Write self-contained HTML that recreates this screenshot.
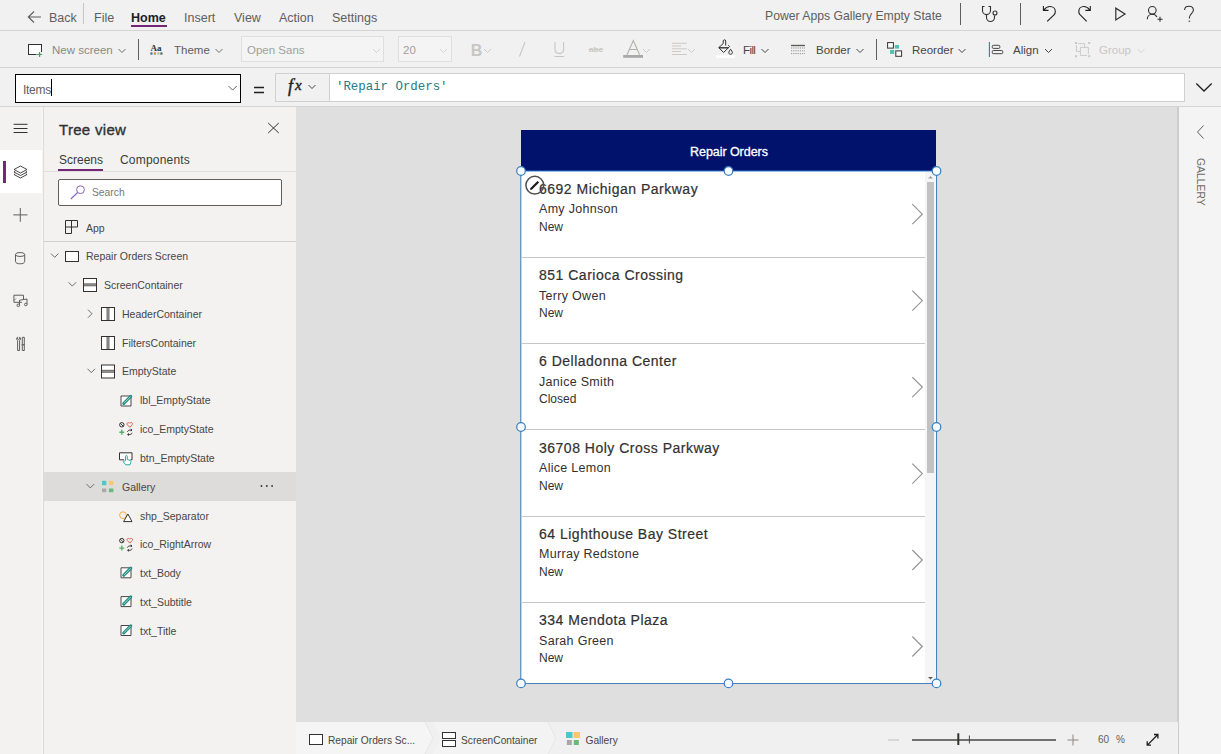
<!DOCTYPE html>
<html><head><meta charset="utf-8">
<style>
*{box-sizing:border-box;margin:0;padding:0}
html,body{width:1221px;height:754px;overflow:hidden;background:#f1f1f1;font-family:"Liberation Sans",sans-serif;color:#323130;position:relative}
.a{position:absolute}
.t{position:absolute;white-space:nowrap;line-height:1}
svg{position:absolute;overflow:visible}
.ov{pointer-events:none}
</style></head><body>
<!-- top bar -->
<div class="a" style="left:0;top:0;width:1221px;height:30px;background:#f1f1f1"></div>
<div class="a" style="left:0;top:30px;width:1221px;height:1px;background:#d4d4d4"></div>

<!-- TOPBAR CONTENT -->
<div class="t" style="left:49px;top:11.8px;font-size:12.5px;color:#605e5c">Back</div>
<div class="a" style="left:83px;top:3px;width:1px;height:21px;background:#c8c6c4"></div>
<div class="t" style="left:94px;top:11.8px;font-size:12.5px;color:#605e5c">File</div>
<div class="t" style="left:131px;top:11.8px;font-size:12.5px;color:#201f1e;font-weight:bold">Home</div>
<div class="a" style="left:131px;top:25px;width:36px;height:2px;background:#742774"></div>
<div class="t" style="left:184px;top:11.8px;font-size:12.5px;color:#605e5c">Insert</div>
<div class="t" style="left:234px;top:11.8px;font-size:12.5px;color:#605e5c">View</div>
<div class="t" style="left:279px;top:11.8px;font-size:12.5px;color:#605e5c">Action</div>
<div class="t" style="left:332px;top:11.8px;font-size:12.5px;color:#605e5c">Settings</div>
<div class="t" style="left:765px;top:10.3px;font-size:12.2px;color:#605e5c">Power Apps Gallery Empty State</div>
<div class="a" style="left:960px;top:3px;width:1px;height:22px;background:#605e5c"></div>
<div class="a" style="left:1020px;top:3px;width:1px;height:22px;background:#605e5c"></div>
<!-- toolbar -->
<div class="a" style="left:0;top:67px;width:1221px;height:1px;background:#d4d4d4"></div>
<!-- formula bar -->
<div class="a" style="left:0;top:106px;width:1221px;height:1px;background:#d4d4d4"></div>

<!-- TOOLBAR CONTENT -->
<div class="t" style="left:52px;top:44.5px;font-size:11.5px;color:#8a8886">New screen</div>
<div class="a" style="left:138px;top:39px;width:1px;height:21px;background:#605e5c"></div>
<div class="t" style="left:174px;top:44.5px;font-size:11.5px;color:#605e5c">Theme</div>
<div class="a" style="left:241px;top:36px;width:143px;height:26px;background:#f4f4f4;border:1px solid #e1dfdd"></div>
<div class="t" style="left:247px;top:44.5px;font-size:11.5px;color:#a19f9d">Open Sans</div>
<div class="a" style="left:398px;top:36px;width:54px;height:26px;background:#f4f4f4;border:1px solid #e1dfdd"></div>
<div class="t" style="left:403px;top:44.5px;font-size:11.5px;color:#a19f9d">20</div>
<div class="t" style="left:743px;top:44.5px;font-size:11.5px;color:#484644;letter-spacing:-0.6px">Fill</div>
<div class="t" style="left:816px;top:44.5px;font-size:11.5px;color:#484644">Border</div>
<div class="a" style="left:876px;top:39px;width:1px;height:21px;background:#605e5c"></div>
<div class="t" style="left:912px;top:44.5px;font-size:11.5px;color:#484644">Reorder</div>
<div class="t" style="left:1013px;top:44.5px;font-size:11.5px;color:#484644">Align</div>
<div class="t" style="left:1099px;top:44.5px;font-size:11.5px;color:#c8c6c4">Group</div>
<!-- FORMULA BAR -->
<div class="a" style="left:15px;top:74px;width:226px;height:29px;background:#fff;border:1.5px solid #000"></div>
<div class="t" style="left:23px;top:83.5px;font-size:12px;color:#605e5c;letter-spacing:-0.3px">Items</div>
<div class="a" style="left:51px;top:79px;width:1px;height:17px;background:#000"></div>
<div class="a" style="left:275px;top:73px;width:55px;height:29px;background:#f1f1f1;border:1px solid #d2d0ce"></div>
<div class="a" style="left:329px;top:73px;width:856px;height:29px;background:#fff;border:1px solid #d2d0ce"></div>
<div class="t" style="left:336px;top:81px;font-size:12.4px;color:#227b85;font-family:'Liberation Mono',monospace">'Repair Orders'</div>
<div class="t" style="left:288px;top:76.5px;font-size:18px;color:#201f1e;font-family:'Liberation Serif',serif;font-style:italic;-webkit-text-stroke:0.4px #201f1e">f</div>
<div class="t" style="left:295px;top:78px;font-size:15px;color:#201f1e;font-family:'Liberation Serif',serif;font-style:italic;-webkit-text-stroke:0.4px #201f1e">x</div>
<!-- left rail -->
<div class="a" style="left:0;top:107px;width:43px;height:647px;background:#f3f2f1"></div>
<div class="a" style="left:41px;top:107px;width:2px;height:647px;background:#f6f5f4"></div>
<div class="a" style="left:43px;top:107px;width:1px;height:647px;background:#dcdcdc"></div>
<!-- tree panel -->
<div class="a" style="left:44px;top:107px;width:252px;height:647px;background:#f3f2f1"></div>
<!-- canvas -->
<div class="a" style="left:296px;top:107px;width:882px;height:615px;background:#dfdfdf"></div>
<!-- bottom bar -->
<!-- right panel -->
<div class="a" style="left:1177px;top:107px;width:2px;height:647px;background:#cdcdcd"></div>
<div class="a" style="left:1179px;top:107px;width:42px;height:647px;background:#f4f4f4"></div>


<!-- TREE -->
<div class="a" style="left:0;top:150px;width:42px;height:43px;background:#fff"></div>
<div class="a" style="left:3px;top:161px;width:3px;height:22px;background:#742774"></div>
<div class="t" style="left:59px;top:122px;font-size:15px;color:#323130;-webkit-text-stroke:0.35px #323130;letter-spacing:0.3px">Tree view</div>
<div class="t" style="left:59px;top:153.5px;font-size:12px;color:#3b3a39">Screens</div>
<div class="t" style="left:120px;top:153.5px;font-size:12px;color:#3b3a39;letter-spacing:0.2px">Components</div>
<div class="a" style="left:44px;top:171px;width:252px;height:1px;background:#e1dfdd"></div>
<div class="a" style="left:58px;top:169px;width:45px;height:2px;background:#742774"></div>
<div class="a" style="left:58px;top:179px;width:224px;height:27px;background:#fff;border:1px solid #605e5c;border-radius:2px"></div>
<div class="t" style="left:92px;top:188.3px;font-size:10.3px;color:#797775">Search</div>
<div class="t" style="left:86px;top:223.4px;font-size:10.5px;color:#484644">App</div>
<div class="a" style="left:44px;top:241px;width:252px;height:1px;background:#d2d0ce"></div>
<div class="a" style="left:44px;top:472px;width:252px;height:29px;background:#dddcdb"></div>
<div class="t" style="left:86px;top:251.1px;font-size:10.5px;color:#484644">Repair Orders Screen</div>
<div class="t" style="left:104px;top:279.9px;font-size:10.5px;color:#484644">ScreenContainer</div>
<div class="t" style="left:122px;top:308.7px;font-size:10.5px;color:#484644">HeaderContainer</div>
<div class="t" style="left:122px;top:337.6px;font-size:10.5px;color:#484644">FiltersContainer</div>
<div class="t" style="left:122px;top:366.4px;font-size:10.5px;color:#484644">EmptyState</div>
<div class="t" style="left:140px;top:395.2px;font-size:10.5px;color:#484644">lbl_EmptyState</div>
<div class="t" style="left:140px;top:424.1px;font-size:10.5px;color:#484644">ico_EmptyState</div>
<div class="t" style="left:140px;top:452.9px;font-size:10.5px;color:#484644">btn_EmptyState</div>
<div class="t" style="left:122px;top:481.7px;font-size:10.5px;color:#484644">Gallery</div>
<div class="t" style="left:140px;top:510.6px;font-size:10.5px;color:#484644">shp_Separator</div>
<div class="t" style="left:140px;top:539.4px;font-size:10.5px;color:#484644">ico_RightArrow</div>
<div class="t" style="left:140px;top:568.2px;font-size:10.5px;color:#484644">txt_Body</div>
<div class="t" style="left:140px;top:597.0px;font-size:10.5px;color:#484644">txt_Subtitle</div>
<div class="t" style="left:140px;top:625.9px;font-size:10.5px;color:#484644">txt_Title</div>

<!-- BOTTOM BAR -->
<div class="a" style="left:296px;top:722px;width:882px;height:32px;background:#f0f0f0"></div>
<svg class="ov" style="left:296px;top:722px" width="300" height="32" viewBox="0 0 300 32">
<path d="M0 0H129L137 16L129 32H0Z" fill="#f5f5f5"/>
<path d="M129 0L137 16L129 32" fill="none" stroke="#e6e6e6" stroke-width="1"/>
<path d="M137 0H252L260 16L252 32H137L145 16Z" fill="#f3f3f3"/>
<path d="M252 0L260 16L252 32" fill="none" stroke="#e6e6e6" stroke-width="1"/>
</svg>
<div class="t" style="left:328px;top:735.6px;font-size:10.2px;color:#484644">Repair Orders Sc...</div>
<div class="t" style="left:461px;top:735.6px;font-size:10.2px;color:#484644">ScreenContainer</div>
<div class="t" style="left:585.5px;top:735.6px;font-size:10.2px;color:#484644">Gallery</div>
<div class="t" style="left:1098px;top:735.3px;font-size:10px;color:#605e5c">60</div>
<div class="t" style="left:1116px;top:735.3px;font-size:10px;color:#605e5c">%</div>
<!-- RIGHT PANEL -->
<div class="t" style="left:1205.3px;top:158px;font-size:10.4px;color:#6b6967;transform-origin:0 0;transform:rotate(90deg);letter-spacing:0px">GALLERY</div>
<!-- app -->
<div class="a" style="left:521px;top:130px;width:415px;height:41px;background:#00126b"></div>
<div class="a" style="left:521px;top:171px;width:415px;height:513px;background:#fff"></div>
<div class="t" style="left:690px;top:146px;font-size:12.5px;color:#fff;-webkit-text-stroke:0.3px #fff;letter-spacing:-0.05px">Repair Orders</div>
<div class="t" style="left:539px;top:181.8px;font-size:14px;color:#323130;letter-spacing:0.5px;-webkit-text-stroke:0.2px #323130">6692 Michigan Parkway</div>
<div class="t" style="left:539px;top:203.4px;font-size:12.5px;color:#323130;letter-spacing:0.3px">Amy Johnson</div>
<div class="t" style="left:539px;top:220.8px;font-size:12px;color:#323130">New</div>
<div class="a" style="left:522px;top:257px;width:403px;height:1px;background:#c8c6c4"></div>
<div class="t" style="left:539px;top:268.1px;font-size:14px;color:#323130;letter-spacing:0.5px;-webkit-text-stroke:0.2px #323130">851 Carioca Crossing</div>
<div class="t" style="left:539px;top:289.7px;font-size:12.5px;color:#323130;letter-spacing:0.3px">Terry Owen</div>
<div class="t" style="left:539px;top:307.1px;font-size:12px;color:#323130">New</div>
<div class="a" style="left:522px;top:343px;width:403px;height:1px;background:#c8c6c4"></div>
<div class="t" style="left:539px;top:354.3px;font-size:14px;color:#323130;letter-spacing:0.5px;-webkit-text-stroke:0.2px #323130">6 Delladonna Center</div>
<div class="t" style="left:539px;top:375.9px;font-size:12.5px;color:#323130;letter-spacing:0.3px">Janice Smith</div>
<div class="t" style="left:539px;top:393.3px;font-size:12px;color:#323130">Closed</div>
<div class="a" style="left:522px;top:429px;width:403px;height:1px;background:#c8c6c4"></div>
<div class="t" style="left:539px;top:440.6px;font-size:14px;color:#323130;letter-spacing:0.5px;-webkit-text-stroke:0.2px #323130">36708 Holy Cross Parkway</div>
<div class="t" style="left:539px;top:462.2px;font-size:12.5px;color:#323130;letter-spacing:0.3px">Alice Lemon</div>
<div class="t" style="left:539px;top:479.6px;font-size:12px;color:#323130">New</div>
<div class="a" style="left:522px;top:516px;width:403px;height:1px;background:#c8c6c4"></div>
<div class="t" style="left:539px;top:526.8px;font-size:14px;color:#323130;letter-spacing:0.5px;-webkit-text-stroke:0.2px #323130">64 Lighthouse Bay Street</div>
<div class="t" style="left:539px;top:548.4px;font-size:12.5px;color:#323130;letter-spacing:0.3px">Murray Redstone</div>
<div class="t" style="left:539px;top:565.8px;font-size:12px;color:#323130">New</div>
<div class="a" style="left:522px;top:602px;width:403px;height:1px;background:#c8c6c4"></div>
<div class="t" style="left:539px;top:613.1px;font-size:14px;color:#323130;letter-spacing:0.5px;-webkit-text-stroke:0.2px #323130">334 Mendota Plaza</div>
<div class="t" style="left:539px;top:634.7px;font-size:12.5px;color:#323130;letter-spacing:0.3px">Sarah Green</div>
<div class="t" style="left:539px;top:652.1px;font-size:12px;color:#323130">New</div>
<div class="a" style="left:925px;top:172px;width:10px;height:511px;background:#f5f5f5"></div>
<div class="a" style="left:927px;top:182px;width:7px;height:291px;background:#c2c2c2"></div>

<svg class="ov" style="left:0;top:0" width="1221" height="754" viewBox="0 0 1221 754" fill="none" stroke-linecap="butt">
<!-- back arrow -->
<path d="M41 17H28.5M34 11.5L28.3 17L34 22.5" stroke="#605e5c" stroke-width="1.1"/>
<!-- stethoscope -->
<g stroke="#323130" stroke-width="1.1">
<path d="M984.5 6.5H982.5V10.5C982.5 12.8 984.3 14.6 986.5 14.6C988.7 14.6 990.5 12.8 990.5 10.5V6.5H988.5"/>
<path d="M986.5 14.6V17.5C986.5 19.8 988.3 21.5 990.5 21.5C992.7 21.5 994.5 19.8 994.5 17.5V15.5"/>
<circle cx="995" cy="13" r="2"/>
</g>
<!-- undo -->
<path d="M1043.4 6V10.4H1048.5M1043.9 10C1045.5 7.8 1047.6 6.5 1050 6.5C1053 6.5 1055.3 8.7 1055.3 11.5C1055.3 12.8 1054.8 14 1054 14.8L1047.2 21.4" stroke="#201f1e" stroke-width="1.1"/>
<!-- redo -->
<path d="M1090.3 6V10.4H1085.4M1089.8 10C1088.2 7.8 1086.2 6.5 1083.8 6.5C1080.9 6.5 1078.8 8.7 1078.8 11.5C1078.8 12.8 1079.3 14 1080 14.6L1086.7 21.4" stroke="#201f1e" stroke-width="1.1"/>
<!-- play -->
<path d="M1115.8 8.2V20L1125 14.1Z" stroke="#323130" stroke-width="1.2" stroke-linejoin="miter"/>
<!-- person add -->
<g stroke="#323130" stroke-width="1.1">
<circle cx="1152.3" cy="10.3" r="3.8"/>
<path d="M1147.3 19.3C1147.3 16.3 1149.5 14.3 1152.3 14.3C1154.6 14.3 1156.2 15.5 1156.9 17"/>
<path d="M1160 16.8V21.8M1157.5 19.3H1162.6"/>
</g>
<!-- help -->
<path d="M1184.6 10C1184.6 7.6 1186.6 6.2 1189 6.2C1191.5 6.2 1193.4 7.8 1193.4 10.2C1193.4 12.9 1189.4 13.9 1189.4 17.6V18.6" stroke="#323130" stroke-width="1.1"/>
<path d="M1188.6 21.2H1190.2" stroke="#323130" stroke-width="1"/>

<!-- toolbar icons -->
<rect x="28.5" y="44.5" width="13" height="10" fill="#fff" stroke="#323130" stroke-width="1"/>
<path d="M36.5 52H42.5V56H36.5Z" fill="#f1f1f1"/>
<path d="M39.6 52V57M37.1 54.5H42.1" stroke="#4c9a5c" stroke-width="1.2"/>
<path d="M118.5 49L122 52.5L125.5 49" stroke="#605e5c" stroke-width="0.9"/>
<text x="150.5" y="50.8" font-family="Liberation Serif" font-size="9" font-weight="bold" fill="#323130">Aa</text>
<rect x="150.3" y="52.3" width="2.2" height="2.4" fill="#4a77b4"/>
<rect x="153.8" y="52.3" width="2.2" height="2.4" fill="#e0883a"/>
<rect x="157.3" y="52.3" width="2.2" height="2.4" fill="#c9b78d"/>
<rect x="160.3" y="52.3" width="2.2" height="2.4" fill="#4f7268"/>
<path d="M215.5 49L219 52.5L222.5 49" stroke="#605e5c" stroke-width="0.9"/>
<path d="M373 49L376.5 52.5L380 49" stroke="#d2d0ce" stroke-width="0.9"/>
<path d="M440 49L443.5 52.5L447 49" stroke="#d2d0ce" stroke-width="0.9"/>
<!-- B I U abc -->
<text x="470.8" y="55.6" font-family="Liberation Sans" font-size="16" font-weight="bold" fill="#c8c6c4">B</text>
<path d="M484 49L487.5 52.5L491 49" stroke="#c8c6c4" stroke-width="0.9"/>
<path d="M525 42L519.5 56.5" stroke="#c8c6c4" stroke-width="1.1"/>
<path d="M555 42V49.5C555 52 556.8 53.4 559.3 53.4C561.8 53.4 563.6 52 563.6 49.5V42" stroke="#c8c6c4" stroke-width="1.1"/>
<path d="M554.5 56.5H564.2" stroke="#c8c6c4" stroke-width="1"/>
<text x="589" y="52.3" font-family="Liberation Sans" font-size="8" font-weight="bold" fill="#c8c6c4" textLength="14">abc</text>
<path d="M588.5 49.5H603" stroke="#c8c6c4" stroke-width="0.8"/>
<!-- A -->
<path d="M627 54.8L633.3 40.5L639.6 54.8M629.3 49.5H637.3" stroke="#b3b0ad" stroke-width="1.1"/>
<rect x="623.2" y="55" width="19.8" height="2.8" fill="#a8a8a8"/>
<path d="M643 49L646.5 52.5L650 49" stroke="#c8c6c4" stroke-width="0.9"/>
<!-- align text -->
<path d="M672 43.3H686.9M672 46H681M672 48.8H686.9M672 51.5H681M672 54.5H686.9" stroke="#c8c6c4" stroke-width="0.9"/>
<path d="M688 49L691.5 52.5L695 49" stroke="#c8c6c4" stroke-width="0.9"/>
<!-- fill -->
<g stroke="#323130" stroke-width="1" stroke-linejoin="round">
<path d="M723.2 43.6V41C723.2 40.2 723.8 39.8 724.5 39.8C725.2 39.8 725.7 40.2 725.7 41V45.5"/>
<path d="M723.2 43.6L718.7 47.6L723.6 52.5L729.6 46.5L728.2 45.2"/>
<path d="M719 47.8H728.4" stroke-width="1.4"/>
<path d="M730.6 49.2C729.8 50.5 728.8 51.6 728.8 52.6C728.8 53.6 729.6 54.3 730.6 54.3C731.6 54.3 732.4 53.6 732.4 52.6C732.4 51.6 731.4 50.5 730.6 49.2Z"/>
</g>
<rect x="716" y="55.4" width="19" height="2.4" fill="#ffffff"/>
<path d="M761.5 49L765 52.5L768.5 49" stroke="#323130" stroke-width="0.9"/>
<!-- border -->
<rect x="791" y="44.8" width="14" height="1.4" fill="#605e5c"/>
<path d="M791 48H805M791 50.8H805M791 53.6H805" stroke="#8a8886" stroke-width="0.9" stroke-dasharray="1.2 1"/>
<path d="M856.5 49L860 52.5L863.5 49" stroke="#323130" stroke-width="0.9"/>
<!-- reorder -->
<rect x="894.8" y="45" width="4.2" height="3.6" fill="#4ec3b5"/>
<rect x="890" y="50" width="4.2" height="3.9" fill="#4ec3b5"/>
<rect x="887.6" y="42.6" width="5.8" height="5.5" fill="#fff" stroke="#323130" stroke-width="1"/>
<rect x="895.8" y="50.9" width="5.8" height="5.4" fill="#fff" stroke="#323130" stroke-width="1"/>
<path d="M958.5 49L962 52.5L965.5 49" stroke="#323130" stroke-width="0.9"/>
<!-- align -->
<path d="M989.4 42V57" stroke="#2b8a84" stroke-width="1.1"/>
<rect x="992.3" y="45.3" width="7.5" height="3.1" rx="1" stroke="#323130" stroke-width="0.9"/>
<rect x="992.3" y="50.5" width="10.4" height="3.2" rx="1" stroke="#323130" stroke-width="0.9"/>
<path d="M1045 49L1048.5 52.5L1052 49" stroke="#323130" stroke-width="0.9"/>
<!-- group -->
<g fill="#c8c6c4"><rect x="1075" y="42" width="2" height="2"/><rect x="1088.2" y="42" width="2" height="2"/><rect x="1075" y="55.2" width="2" height="2"/><rect x="1088.2" y="55.2" width="2" height="2"/></g>
<path d="M1078 43.6H1084.6V47.3M1076.4 45V51.4H1080.3M1080.4 47.4H1088.4V54M1080.4 47.4V55.4H1087" stroke="#c8c6c4" stroke-width="0.9"/>
<path d="M1137.5 49L1141 52.5L1144.5 49" stroke="#d2d0ce" stroke-width="0.9"/>
<!-- formula chevrons -->
<path d="M228.5 86L232.6 90.1L236.7 86" stroke="#605e5c" stroke-width="1"/>
<path d="M308.5 85L312 88.5L315.5 85" stroke="#323130" stroke-width="0.9"/>
<path d="M254 87.5H264M254 92.5H264" stroke="#201f1e" stroke-width="1.6"/>
<path d="M1196.3 83.5L1204 91L1211.7 83.5" stroke="#201f1e" stroke-width="1.3"/>

<!-- tree icons -->
<path d="M65.5 220.5H77.5V227H71.5V233.5H65.5ZM71.5 220.5V227M65.5 227H71.5" fill="none" stroke="#323130"/>
<rect x="65.5" y="251.5" width="13" height="10" fill="#fff" stroke="#323130"/>
<rect x="83.5" y="278.5" width="13" height="13" fill="#fff" stroke="#323130"/><path d="M84 284.8H96" stroke="#a19f9d" stroke-width="1.6"/><path d="M83.5 283.8H96.5M83.5 285.8H96.5" stroke="#323130" stroke-width="0.7"/>
<rect x="101.5" y="307.5" width="13" height="13" fill="#fff" stroke="#323130"/><path d="M108 308V320" stroke="#a19f9d" stroke-width="1.6"/><path d="M107 307.5V320.5M109 307.5V320.5" stroke="#323130" stroke-width="0.7"/>
<rect x="101.5" y="336.5" width="13" height="13" fill="#fff" stroke="#323130"/><path d="M108 337V349" stroke="#a19f9d" stroke-width="1.6"/><path d="M107 336.5V349.5M109 336.5V349.5" stroke="#323130" stroke-width="0.7"/>
<rect x="101.5" y="365.0" width="13" height="13" fill="#fff" stroke="#323130"/><path d="M102 371.3H114" stroke="#a19f9d" stroke-width="1.6"/><path d="M101.5 370.3H114.5M101.5 372.3H114.5" stroke="#323130" stroke-width="0.7"/>
<path d="M121.0 396.0H131.0V406.0H121.0Z" fill="#fff" stroke="#484644"/><path d="M123.7 403.5L130.8 396.3" stroke="#2a8a80" stroke-width="3" stroke-linecap="round"/><path d="M123.9 403.3L130.6 396.5" stroke="#8ee8dc" stroke-width="0.9"/>
<circle cx="121.8" cy="424.8" r="2.2" stroke="#323130" stroke-width="1"/><path d="M120.3 423.3L123.3 426.3" stroke="#323130" stroke-width="0.9"/><path d="M129.8 427.3L127.39999999999999 424.8C126.6 424.0 127.0 422.6 128.3 422.6C129.1 422.6 129.8 423.3 129.8 423.3C129.8 423.3 130.5 422.6 131.3 422.6C132.6 422.6 133.0 424.0 132.2 424.8Z" stroke="#e0604a" stroke-width="1"/><path d="M121.8 429.8V434.8M119.3 432.3H124.3" stroke="#5cae6a" stroke-width="1.4"/><path d="M127.5 431.8C127.8 430.6 128.8 430.1 129.8 430.1H131.8M130.8 429.1L132.0 430.1L130.8 431.1M132.1 432.8C131.8 434.0 130.8 434.5 129.8 434.5H127.8M128.8 433.5L127.6 434.5L128.8 435.5" stroke="#323130" stroke-width="1"/>
<path d="M124 459.8H119.5V452.8H132V459.8H130.5" fill="#fff" stroke="#323130"/><path d="M125.5 460.8V456.3C125.5 455.3 127.3 455.3 127.3 456.3V459.6L130 460.3C131 460.6 131 461.3 130.8 462.3L130 464.8H125.8L123.5 462.1C123 461.3 124 460.5 124.8 461.1Z" fill="#fff" stroke="#2aa8a0" stroke-width="1"/>
<rect x="102" y="480.8" width="4.3" height="4.4" fill="#4cc8c8"/><rect x="108.9" y="480.8" width="4.5" height="4.4" fill="#f8c870"/><rect x="102" y="488.5" width="4.3" height="3.7" fill="#a8a8a8"/><rect x="108.9" y="488.5" width="4.5" height="3.7" fill="#6ab87a"/>
<g fill="#323130"><circle cx="261.5" cy="486" r="0.9"/><circle cx="266.8" cy="486" r="0.9"/><circle cx="272.1" cy="486" r="0.9"/></g>
<circle cx="123" cy="515.2" r="3.4" stroke="#f0b040" stroke-width="1"/><path d="M127.9 514.0L132 521.6H123.6Z" fill="#fff" stroke="#323130" stroke-width="1" stroke-linejoin="miter"/>
<circle cx="121.8" cy="540.6" r="2.2" stroke="#323130" stroke-width="1"/><path d="M120.3 539.1L123.3 542.1" stroke="#323130" stroke-width="0.9"/><path d="M129.8 543.1L127.39999999999999 540.6C126.6 539.8000000000001 127.0 538.4 128.3 538.4C129.1 538.4 129.8 539.1 129.8 539.1C129.8 539.1 130.5 538.4 131.3 538.4C132.6 538.4 133.0 539.8000000000001 132.2 540.6Z" stroke="#e0604a" stroke-width="1"/><path d="M121.8 545.6V550.6M119.3 548.1H124.3" stroke="#5cae6a" stroke-width="1.4"/><path d="M127.5 547.6C127.8 546.4 128.8 545.9 129.8 545.9H131.8M130.8 544.9L132.0 545.9L130.8 546.9M132.1 548.6C131.8 549.8000000000001 130.8 550.3000000000001 129.8 550.3000000000001H127.8M128.8 549.3000000000001L127.6 550.3000000000001L128.8 551.3000000000001" stroke="#323130" stroke-width="1"/>
<path d="M121.0 567.8H131.0V577.8H121.0Z" fill="#fff" stroke="#484644"/><path d="M123.7 575.3L130.8 568.0999999999999" stroke="#2a8a80" stroke-width="3" stroke-linecap="round"/><path d="M123.9 575.0999999999999L130.6 568.3" stroke="#8ee8dc" stroke-width="0.9"/>
<path d="M121.0 596.6H131.0V606.6H121.0Z" fill="#fff" stroke="#484644"/><path d="M123.7 604.1L130.8 596.9" stroke="#2a8a80" stroke-width="3" stroke-linecap="round"/><path d="M123.9 603.9L130.6 597.1" stroke="#8ee8dc" stroke-width="0.9"/>
<path d="M121.0 625.5H131.0V635.5H121.0Z" fill="#fff" stroke="#484644"/><path d="M123.7 633L130.8 625.8" stroke="#2a8a80" stroke-width="3" stroke-linecap="round"/><path d="M123.9 632.8L130.6 626" stroke="#8ee8dc" stroke-width="0.9"/>
<circle cx="80.5" cy="189.7" r="3.9" stroke="#8764b8" stroke-width="1"/><path d="M77.7 192.5L70.8 199" stroke="#8764b8" stroke-width="1.1"/>
<path d="M268.2 123L278.8 133M278.8 123L268.2 133" stroke="#323130" stroke-width="1"/>
<path d="M13.6 124.3H27.5M13.6 128.5H27.5M13.6 132.5H27.5" stroke="#323130" stroke-width="1"/>
<g stroke="#323130" stroke-width="0.9" stroke-linejoin="round"><path d="M20.5 166L27 169.5L20.5 173L14 169.5Z" fill="#fff"/><path d="M15.2 171.3L14 172L20.5 175.5L27 172L25.8 171.3"/><path d="M15.2 173.8L14 174.5L20.5 178L27 174.5L25.8 173.8"/></g>
<path d="M20.3 208V221.8M13.3 214.9H27.5" stroke="#605e5c" stroke-width="1"/>
<g stroke="#605e5c" stroke-width="1"><path d="M15.5 254.5V261.5C15.5 263 17.7 263.8 20.1 263.8C22.5 263.8 24.7 263 24.7 261.5V254.5"/><ellipse cx="20.1" cy="254.5" rx="4.6" ry="2"/></g>
<g stroke="#605e5c" stroke-width="1"><path d="M22 302.3H13.9V295.2H23.5V299"/><path d="M16 298.5L14 300.5" stroke-width="0.8"/><path d="M19.5 305.2V300.2L27 299V304.4"/><circle cx="18.3" cy="305.3" r="1.3"/><circle cx="25.8" cy="304.5" r="1.3"/></g>
<g stroke="#605e5c" stroke-width="1"><path d="M17.6 340.5C16.3 340 16.3 337.5 17.6 337.2V339L18.6 339.5L19.6 339V337.2C20.9 337.5 20.9 340 19.6 340.5V350.5H17.6Z"/><path d="M22.3 337.3H24.3V344.8H22.3ZM21.5 344.8H25M22.3 345.2V350.5H24.3V345.2"/></g>

<!-- gallery chevrons -->
<path d="M912.3 204.2L922.3 214.2L912.3 224.2" stroke="#979593" stroke-width="1.2"/>
<path d="M912.3 290.6L922.3 300.6L912.3 310.6" stroke="#979593" stroke-width="1.2"/>
<path d="M912.3 377.1L922.3 387.1L912.3 397.1" stroke="#979593" stroke-width="1.2"/>
<path d="M912.3 463.6L922.3 473.6L912.3 483.6" stroke="#979593" stroke-width="1.2"/>
<path d="M912.3 550.0L922.3 560.0L912.3 570.0" stroke="#979593" stroke-width="1.2"/>
<path d="M912.3 636.5L922.3 646.5L912.3 656.5" stroke="#979593" stroke-width="1.2"/>
<path d="M928 178.5L930.5 176L933 178.5Z" fill="#a0a0a0"/>
<path d="M928 677L930.5 679.5L933 677Z" fill="#605e5c"/>
<path d="M520.8 171.5V683.5H936.5V171.5" stroke="#4683bd" stroke-width="1.1"/>
<path d="M521 171H936.5" stroke="#2f7ad0" stroke-width="1"/>
<circle cx="521" cy="171" r="4.3" fill="#f4fcff" stroke="#3a7ec0" stroke-width="1.2"/>
<circle cx="728.5" cy="171" r="4.3" fill="#f4fcff" stroke="#3a7ec0" stroke-width="1.2"/>
<circle cx="936.5" cy="171" r="4.3" fill="#f4fcff" stroke="#3a7ec0" stroke-width="1.2"/>
<circle cx="521" cy="427" r="4.3" fill="#f4fcff" stroke="#3a7ec0" stroke-width="1.2"/>
<circle cx="936.5" cy="427" r="4.3" fill="#f4fcff" stroke="#3a7ec0" stroke-width="1.2"/>
<circle cx="521" cy="683.4" r="4.3" fill="#f4fcff" stroke="#3a7ec0" stroke-width="1.2"/>
<circle cx="728.5" cy="683.4" r="4.3" fill="#f4fcff" stroke="#3a7ec0" stroke-width="1.2"/>
<circle cx="936.5" cy="683.4" r="4.3" fill="#f4fcff" stroke="#3a7ec0" stroke-width="1.2"/>
<circle cx="534.8" cy="185.2" r="8.9" fill="none" stroke="#505050" stroke-width="1.5"/>
<path d="M530.8 189.2L538.3 181.7" stroke="#1b1a19" stroke-width="2.2"/>
<path d="M530 190.3L530.8 188.5L531.5 189.6Z" fill="#1b1a19"/>

<!-- bottom icons -->
<rect x="309.5" y="734.5" width="13" height="10" fill="#fff" stroke="#323130"/>
<rect x="442.5" y="732.5" width="13" height="6" fill="#fff" stroke="#323130"/><rect x="442.5" y="740.5" width="13" height="6" fill="#fff" stroke="#323130"/>
<rect x="566" y="732" width="6.5" height="6" fill="#4cc8c8"/><rect x="573.5" y="732" width="6.5" height="6" fill="#f8c870"/>
<rect x="566.8" y="740" width="5" height="5" fill="#a8a8a8"/><rect x="573.8" y="740" width="5" height="5" fill="#6ab87a"/>
<path d="M888 740H899" stroke="#c8c6c4" stroke-width="1.2"/>
<path d="M912 740H1056" stroke="#484644" stroke-width="1.6"/>
<path d="M958.3 733.3V745" stroke="#323130" stroke-width="2"/>
<path d="M969.4 735.5V743.5" stroke="#484644" stroke-width="1"/>
<path d="M1073 734.5V745.5M1067.5 740H1078.5" stroke="#8a8886" stroke-width="1"/>
<path d="M1147.6 744.9L1157.6 734.7M1154 734.5H1157.9V738.4M1147.2 741.2V745.1H1151" stroke="#201f1e" stroke-width="1.3"/>
<path d="M1203.5 125.5L1197.5 132L1203.5 138.5" stroke="#605e5c" stroke-width="1"/>
<!-- tree chevrons -->
<path d="M50.9 253.5L54.699999999999996 257.3L58.5 253.5" stroke="#605e5c" stroke-width="0.9"/>
<path d="M68.5 282.3L72.3 286.1L76.1 282.3" stroke="#605e5c" stroke-width="0.9"/>
<path d="M88 309.7L92 313.7L88 317.7" stroke="#605e5c" stroke-width="0.9"/>
<path d="M87.5 368.8L91.3 372.6L95.1 368.8" stroke="#605e5c" stroke-width="0.9"/>
<path d="M86.5 484.1L90.3 487.9L94.1 484.1" stroke="#605e5c" stroke-width="0.9"/>
</svg>
</body>
</html>
